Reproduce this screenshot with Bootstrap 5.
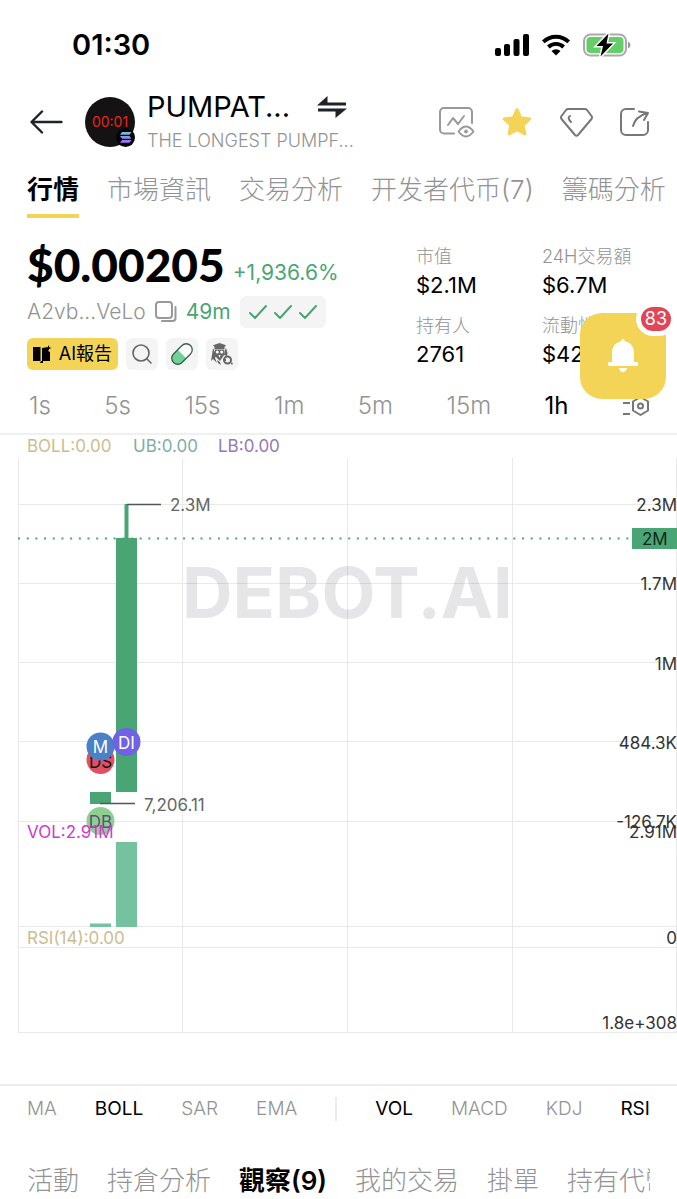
<!DOCTYPE html>
<html lang="zh-Hant">
<head>
<meta charset="utf-8">
<meta name="viewport" content="width=device-width, initial-scale=1">
<title>PUMPATHON - DEBOT.AI</title>
<link href="https://cdn.jsdelivr.net/npm/bootstrap@5.3.0/dist/css/bootstrap.min.css" rel="stylesheet">
<style>
  :root { --up:#4aa574; --muted:#939393; --brand:#f4d457; --soft:#f4f4f4; }
  body { font-family:Inter,"Noto Sans CJK TC",sans-serif; color:#000; background:#fff; overflow-x:hidden; }
  svg { display:block; flex:none; }
  a { color:inherit; text-decoration:none; }
  button { border:0; background:none; padding:0; color:inherit; }
  .gutter { padding-left:27px; padding-right:27px; }
  .statusbar { height:90px; padding:0 46px 0 72px; }
  .status-icons { gap:12px; }
  .clock { font-size:29px; font-weight:600; }
  .topbar { height:64px; padding-left:30px; }
  .avatar { width:50px; height:50px; margin-left:22px; }
  .token { margin-left:12px; width:210px; }
  .token-name { font-size:29px; line-height:32px; font-weight:400; gap:27px; }
  .token-sub { font-size:18px; line-height:24px; color:var(--muted); font-weight:300; margin-top:6px; }
  .tools { width:211px; }
  .tabs { gap:28px; font-size:26px; line-height:36px; font-weight:300; color:var(--muted); white-space:nowrap; overflow:hidden; }
  .tabs .on { color:#000; font-weight:600; }
  .tabs-top { height:64px; padding-top:18px; padding-left:27px; }
  .tabs-top .on { border-bottom:4px solid var(--brand); height:46px; }
  .summary { display:grid; grid-template-columns:1fr 126px 135px; padding-left:27px; height:159px; padding-top:21px; }
  .price-row { gap:8px; }
  .price { font-family:Lato,sans-serif; font-size:46px; line-height:52px; font-weight:900; }
  .change { font-size:21px; line-height:28px; color:var(--up); padding-bottom:4px; }
  .addr { font-size:21px; line-height:32px; color:var(--muted); font-weight:300; margin-top:5px; gap:9px; }
  .age { color:var(--up); font-weight:400; }
  .checks { background:var(--soft); border-radius:6px; height:32px; width:86px; }
  .chip { background:var(--soft); border-radius:6px; width:32px; height:32px; }
  .report { background:var(--brand); border-radius:6px; height:32px; width:91px; font-size:18px; line-height:32px; gap:7px; }
  .chips { margin-top:10px; gap:8px; }
  .stat { margin:0; height:69px; padding-top:5px; }
  .stat dt { font-size:18px; line-height:26px; font-weight:300; color:var(--muted); white-space:nowrap; }
  .stat dd { font-size:22px; line-height:30px; margin:0; }
  .frames { height:56px; font-size:24px; color:var(--muted); font-weight:300; padding-top:2px; padding-left:29px; }
  .frames .on { color:#000; font-weight:400; }
  .alerts { position:absolute; right:11px; top:313px; width:86px; height:86px; border-radius:22px; background:var(--brand); }
  .alerts-count { position:absolute; right:-10px; top:-11px; min-width:40px; height:34px; border:5px solid #fff; border-radius:17px; background:#df4759; color:#fff; font-size:18px; line-height:24px; }
  .chart { border-top:2px solid #f0f0f0; border-bottom:2px solid #ececec; }
  .chart svg { width:100%; height:auto; }
  .indicators { height:46px; font-size:19px; color:var(--muted); font-weight:300; }
  .indicators .on { color:#000; font-weight:400; }
  .rule { width:2px; height:24px; background:#ececec; }
  .tabs-bottom { margin:29px 27px 0; height:40px; line-height:40px; }
</style>
</head>
<body class="position-relative">
<div class="statusbar d-flex align-items-center justify-content-between">
  <div class="clock">01:30</div>
  <div class="status-icons d-flex align-items-center">
    <svg width="34" height="22" viewBox="0 0 34 22"><rect x="0" y="14" width="6" height="8" rx="2"/><rect x="9" y="10" width="6" height="12" rx="2"/><rect x="18.500" y="5" width="6" height="17" rx="2"/><rect x="28" y="0" width="6" height="22" rx="2"/></svg>
    <svg width="30" height="22" viewBox="0 0 30 22"><path d="M1 6.500a20 20 0 0 1 28 0l-2.700 2.800a16 16 0 0 0-22.600 0zM6 11.600a13 13 0 0 1 18 0l-2.700 2.800a9 9 0 0 0-12.600 0zM10.500 17a6.500 6.500 0 0 1 9 0l-4.500 4.500z"/></svg>
    <svg width="48" height="24" viewBox="0 0 48 24"><rect x="1" y="1.500" width="42" height="21" rx="6.500" fill="none" stroke="#aaa" stroke-width="2"/><path d="M45 8.500q2.500 1 2.500 3.500T45 15.500z" fill="#999"/><rect x="3.500" y="4" width="37" height="16" rx="4" fill="#64cf66"/><path d="M25.500.5 13.500 13h6.500l-2.500 10.500L30 10.500h-6.500z" stroke="#fff" stroke-width="3" paint-order="stroke"/></svg>
  </div>
</div>

<header class="topbar d-flex align-items-center gutter">
  <button type="button" aria-label="返回"><svg width="33" height="24" viewBox="0 0 33 24" fill="none" stroke="#1f2329" stroke-width="2.400" stroke-linecap="round" stroke-linejoin="round"><path d="M31.500 12H2M12 1.500 1.500 12 12 22.500"/></svg></button>
  <svg class="avatar" viewBox="0 0 50 50"><circle cx="25" cy="25" r="25" fill="#141213"/><text x="25" y="30" text-anchor="middle" font-size="14" fill="#e8261c">00:01</text><circle cx="40.500" cy="40.500" r="9.500" fill="#050505"/><defs><linearGradient id="sol" x1="0" y1="1" x2="0" y2="0"><stop offset="0" stop-color="#a66cf5"/><stop offset=".5" stop-color="#8a8cf0"/><stop offset="1" stop-color="#6fc8cc"/></linearGradient></defs><path d="M37 35h9.500l-2 2.800H35zM35 39h9.500l2 2.800H37zM37 43h9.500l-2 2.800H35z" fill="url(#sol)"/></svg>
  <div class="token text-nowrap">
    <div class="token-name d-flex align-items-center">PUMPAT...
      <button type="button" aria-label="切換"><svg width="30" height="24" viewBox="0 0 30 24" fill="#1f2329"><path d="M0 10.500 10.500 1v6.500H29v3zM30 13.500 18.500 23v-6.500H1v-3z"/></svg></button></div>
    <div class="token-sub">THE LONGEST PUMPF...</div>
  </div>
  <nav class="tools d-flex align-items-center justify-content-between ms-auto" aria-label="工具">
    <button type="button" aria-label="圖表觀察"><svg width="36" height="32" viewBox="0 0 36 32" fill="none" stroke="#999" stroke-width="2" stroke-linecap="round" stroke-linejoin="round"><path d="M15 27.500H5a4 4 0 0 1-4-4V6a4 4 0 0 1 4-4h24a4 4 0 0 1 4 4v11M9 19l5-7 5 6 6-8"/><path d="M19.500 25.500Q27 15.500 34.500 25.500 27 35.500 19.500 25.500z"/><circle cx="27" cy="25.500" r="1.500" fill="#999" stroke-width="1"/></svg></button>
    <button type="button" aria-label="收藏"><svg width="30" height="30" viewBox="0 0 30 30" fill="#f4d457" stroke="#f4d457" stroke-width="3" stroke-linejoin="round"><path d="m15 2.500 3.800 8.300 9 1.100-6.600 6.200 1.700 8.900L15 22.600 7.100 27l1.700-8.900-6.600-6.200 9-1.100z"/></svg></button>
    <button type="button" aria-label="鑽石"><svg width="33" height="29" viewBox="0 0 33 29" fill="none" stroke="#777" stroke-width="2" stroke-linecap="round" stroke-linejoin="round"><path d="M8 1h17q1 0 2 1l4.500 6q1 1.500 0 3L18 27q-1.500 1.500-3 0L1.500 11q-1-1.500 0-3L6 2q1-1 2-1zM10 8Q7 10 11 14"/></svg></button>
    <button type="button" aria-label="分享"><svg width="30" height="30" viewBox="0 0 30 30" fill="none" stroke="#777" stroke-width="2" stroke-linecap="round" stroke-linejoin="round"><path d="M14 2H6a5 5 0 0 0-5 5v16a5 5 0 0 0 5 5h17a5 5 0 0 0 5-5v-8M13 19Q15 10 27 6M19 4.500l9 1.500-4 7"/></svg></button>
  </nav>
</header>

<nav class="tabs tabs-top d-flex" aria-label="主分頁">
  <a href="#" class="on">行情</a><a href="#">市場資訊</a><a href="#">交易分析</a><a href="#">开发者代币(7)</a><a href="#">籌碼分析</a>
</nav>

<main>
<section class="summary">
  <div>
    <div class="price-row d-flex align-items-end text-nowrap"><span class="price">$0.00205</span><span class="change">+1,936.6%</span></div>
    <div class="addr d-flex align-items-center"><span>A2vb...VeLo</span>
      <button type="button" aria-label="複製"><svg width="22" height="22" viewBox="0 0 22 22" fill="none" stroke="#999" stroke-width="2" stroke-linecap="round"><rect x="1" y="1" width="16" height="16" rx="3"/><path d="M20.500 6v11a3 3 0 0 1-3 3H7"/></svg></button>
      <span class="age">49m</span>
      <span class="checks d-flex align-items-center justify-content-center"><svg width="70" height="16" viewBox="0 0 70 16" fill="none" stroke="#4aa574" stroke-width="2" stroke-linecap="round" stroke-linejoin="round"><path d="m2 9 5 5L18 2M27 9l5 5L43 2M52 9l5 5L68 2"/></svg></span></div>
    <div class="chips d-flex">
      <button type="button" class="report d-flex align-items-center justify-content-center text-nowrap"><svg width="19" height="18" viewBox="0 0 19 18"><path d="M0 2h7.500v14H0zM9 3l6-1v4l2 1v9H9zM8 16h2v2H7zM15.500 0l.8 2.200 2.200.8-2.200.8-.8 2.200-.8-2.200-2.200-.8 2.200-.8z"/></svg>AI報告</button>
      <button type="button" class="chip d-flex align-items-center justify-content-center" aria-label="搜尋"><svg width="20" height="20" viewBox="0 0 20 20" fill="none" stroke="#666" stroke-width="1.600" stroke-linecap="round"><circle cx="9" cy="9" r="8"/><path d="m15 15 4 4"/></svg></button>
      <button type="button" class="chip d-flex align-items-center justify-content-center" aria-label="Pump"><svg width="22" height="22" viewBox="0 0 22 22"><g transform="rotate(-45 11 11)"><rect x="-1" y="5" width="24" height="12" rx="6" fill="#fff"/><path d="M11 5H5a6 6 0 0 0 0 12h6z" fill="#72d197"/><rect x="-1" y="5" width="24" height="12" rx="6" fill="none" stroke="#345e4c" stroke-width="1.300"/></g></svg></button>
      <button type="button" class="chip d-flex align-items-center justify-content-center" aria-label="貓頭鷹"><svg width="22" height="22" viewBox="0 0 22 22" fill="#666"><path d="M8.500 0 15 2.200 13.500 4v2.500H3.500V4L2 2.200zM2 5l1.500 3 1.500 5-1 2 2 5-4-4L0 18l1-6zM15 5l-1.500 3L13 12l3 1 .5-3z"/><path d="M4 7h9v5l-4 6-5-5zM6 17l3 2 1 3-3-2z"/><circle cx="6.300" cy="9" r="1.500" fill="#fff"/><circle cx="10.700" cy="9" r="1.500" fill="#fff"/><path d="m7.500 12 2 0-1 3z" fill="#fff"/><circle cx="16.500" cy="17" r="3.500" fill="#f4f4f4" stroke="#666" stroke-width="2"/><path d="M12 16h3v2h-3zM19 19l3 1-1 2z"/></svg></button>
    </div>
  </div>
  <div><dl class="stat"><dt>市值</dt><dd>$2.1M</dd></dl><dl class="stat"><dt>持有人</dt><dd>2761</dd></dl></div>
  <div><dl class="stat"><dt>24H交易額</dt><dd>$6.7M</dd></dl><dl class="stat"><dt>流動性</dt><dd>$428K</dd></dl></div>
</section>

<nav class="frames gutter d-flex align-items-center justify-content-between" aria-label="週期">
  <a href="#">1s</a><a href="#">5s</a><a href="#">15s</a><a href="#">1m</a><a href="#">5m</a><a href="#">15m</a><a href="#" class="on">1h</a>
  <button type="button" aria-label="圖表設定"><svg width="28" height="22" viewBox="0 0 28 22" fill="none" stroke="#777" stroke-width="2" stroke-linejoin="round"><path d="M1 8h7M1 19h7M18.500 2l7.500 4.500v9L18.500 20 11 15.500v-9z"/><circle cx="18.500" cy="11" r="2.500"/></svg></button>
</nav>

<section class="chart" aria-label="K線圖">
<svg viewBox="0 0 677 649" font-size="17">
  <g transform="translate(0 -435)">
    <g stroke="#e9e9e9" stroke-width="1"><path d="M18.500 458v574M182.500 458v574M347.500 458v574M512.500 458v574M676.500 458v574M18 504.500h659M18 583.500h659M18 662.500h659M18 741.500h659M18 821.500h659M18 926.500h659M18 947.500h659M18 1032.500h659"/></g>
    <text x="182" y="618" font-size="70" font-weight="700" fill="#404050" fill-opacity=".13">DEBOT.AI</text>
    <g><text x="27" y="452" fill="#cbbd91">BOLL:0.00</text><text x="133" y="452" fill="#7fada5">UB:0.00</text><text x="218" y="452" fill="#9478b7">LB:0.00</text></g>
    <path d="M18 538.500h614" stroke="#4aa574" stroke-width="2" stroke-dasharray="2 6.690"/>
    <path d="M116 538h21v254h-21zM124.500 504h4v35h-4zM90 792h21v12H90z" fill="#4aa574"/>
    <path d="M116 842h21v85h-21zM90 923.500h21v3.500H90z" fill="#75c2a0"/>
    <path d="M127 504.500h34M100 803.500h35" stroke="#555" stroke-width="1.500"/>
    <g fill="#666"><text x="170" y="511">2.3M</text><text x="144" y="811">7,206.11</text></g>
    <g text-anchor="middle">
      <circle cx="100.500" cy="760" r="14" fill="#df5065"/><text x="100.500" y="768" fill="#111">DS</text>
      <circle cx="100.500" cy="746.500" r="14" fill="#4a80c8"/><text x="100.500" y="753" fill="#fff">M</text>
      <circle cx="126.500" cy="742" r="14" fill="#7062e4"/><text x="126.500" y="749" fill="#fff">DI</text>
      <circle cx="100.500" cy="821" r="14" fill="#8fd092"/><text x="100.500" y="828" fill="#5b5276">DB</text>
    </g>
    <text x="27" y="838" fill="#d338d0">VOL:2.91M</text>
    <text x="27" y="944" fill="#cbbd91">RSI(14):0.00</text>
    <g fill="#333" text-anchor="end"><text x="677" y="511">2.3M</text><text x="677" y="590">1.7M</text><text x="677" y="670">1M</text><text x="677" y="749">484.3K</text><text x="677" y="828">-126.7K</text><text x="677" y="838">2.91M</text><text x="677" y="944">0</text><text x="677" y="1029">1.8e+308</text></g>
    <path d="M632 528h45v21h-45z" fill="#4aa574"/><text x="642" y="545" fill="#14291e">2M</text>
  </g>
</svg>
</section>

<nav class="indicators gutter d-flex align-items-center justify-content-between" aria-label="指標">
  <a href="#">MA</a><a href="#" class="on">BOLL</a><a href="#">SAR</a><a href="#">EMA</a><span class="rule"></span><a href="#" class="on">VOL</a><a href="#">MACD</a><a href="#">KDJ</a><a href="#" class="on">RSI</a>
</nav>
<nav class="tabs tabs-bottom d-flex" aria-label="資料分頁">
  <a href="#">活動</a><a href="#">持倉分析</a><a href="#" class="on">觀察(9)</a><a href="#">我的交易</a><a href="#">掛單</a><a href="#">持有代幣</a>
</nav>
</main>

<button type="button" class="alerts d-flex align-items-center justify-content-center" aria-label="通知">
  <svg width="30" height="34" viewBox="0 0 30 34" fill="#fff"><path d="M15 0q1.500 0 1.800 2.200Q26 4 26 14v9h2.500a1.500 1.500 0 0 1 0 4h-27a1.500 1.500 0 0 1 0-4H4v-9Q4 4 13.200 2.200 13.500 0 15 0zM11 29h8q-1 4-4 4t-4-4z"/></svg>
  <span class="alerts-count text-center">83</span>
</button>
<script src="https://cdn.jsdelivr.net/npm/bootstrap@5.3.0/dist/js/bootstrap.bundle.min.js"></script>
</body>
</html>
